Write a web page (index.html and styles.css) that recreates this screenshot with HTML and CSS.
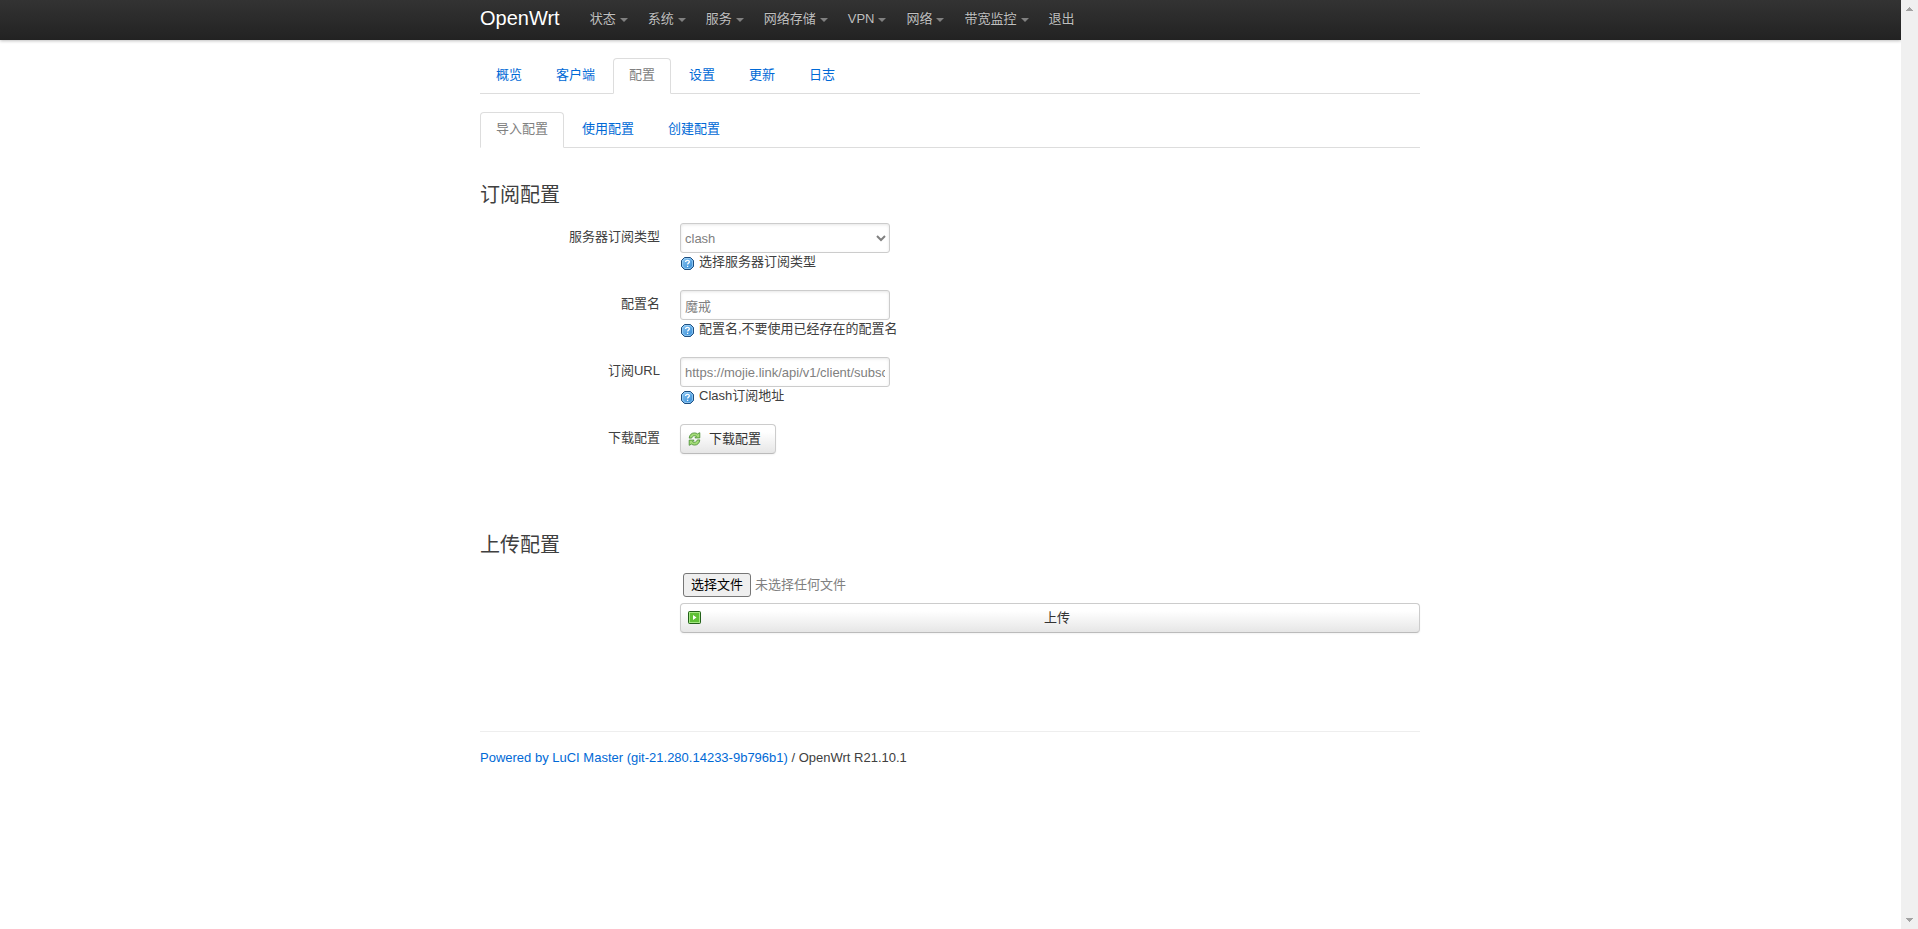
FILE: index.html
```html
<!DOCTYPE html>
<html lang="zh-CN">
<head>
    <meta charset="UTF-8">
    <meta name="viewport" content="width=device-width, initial-scale=1.0">
    <title>OpenWrt - Clash - LuCI</title>
    <link rel="stylesheet" href="styles.css">
</head>
<body>
    <div class="page">
        <header>
            <div class="container">
                <a class="brand" href="#">OpenWrt</a>
                <ul class="nav">
                    <li><a class="menu" href="#">状态</a></li>
                    <li><a class="menu" href="#">系统</a></li>
                    <li><a class="menu" href="#">服务</a></li>
                    <li><a class="menu" href="#">网络存储</a></li>
                    <li><a class="menu" href="#">VPN</a></li>
                    <li><a class="menu" href="#">网络</a></li>
                    <li><a class="menu" href="#">带宽监控</a></li>
                    <li><a href="#">退出</a></li>
                </ul>
            </div>
        </header>

        <main class="container">
            <ul class="tabs">
                <li><a href="#">概览</a></li>
                <li><a href="#">客户端</a></li>
                <li class="active"><a href="#">配置</a></li>
                <li><a href="#">设置</a></li>
                <li><a href="#">更新</a></li>
                <li><a href="#">日志</a></li>
            </ul>
            <ul class="tabs">
                <li class="active"><a href="#">导入配置</a></li>
                <li><a href="#">使用配置</a></li>
                <li><a href="#">创建配置</a></li>
            </ul>

            <svg class="defs" aria-hidden="true">
                <linearGradient id="blue" x1="0" y1="0" x2="1" y2="1">
                    <stop offset="0" stop-color="#8cc8f4"/>
                    <stop offset="1" stop-color="#2f86d2"/>
                </linearGradient>
                <symbol id="help" viewBox="0 0 14 14">
                    <path d="M3.5 .5h6L12.5 3.5v6L9.5 12.5h-6L.5 9.5v-6z" fill="url(#blue)" stroke="#1f4f80"/>
                    <path d="M4 1.5h5l2.5 2.5v5L9 11.5H4L1.5 9V4z" fill="none" stroke="#a5d5f8" stroke-opacity=".7"/>
                    <path d="M4.6 4.9c0-1.1.8-1.6 1.9-1.6s1.9.6 1.9 1.5c0 1.3-1.8 1.3-1.8 2.6M6.6 8.8V10" fill="none" stroke="#fff" stroke-width="1.3"/>
                </symbol>
            </svg>

            <form>
                <section>
                    <h3>订阅配置</h3>
                    <div class="row">
                        <label for="subtype">服务器订阅类型</label>
                        <div class="field">
                            <select id="subtype"><option>clash</option></select>
                            <div class="description"><svg class="icon"><use href="#help"/></svg>选择服务器订阅类型</div>
                        </div>
                    </div>
                    <div class="row">
                        <label for="config_name">配置名</label>
                        <div class="field">
                            <input type="text" id="config_name" value="魔戒">
                            <div class="description"><svg class="icon"><use href="#help"/></svg>配置名,不要使用已经存在的配置名</div>
                        </div>
                    </div>
                    <div class="row">
                        <label for="clash_url">订阅URL</label>
                        <div class="field">
                            <input type="text" id="clash_url" value="https://mojie.link/api/v1/client/subscribe">
                            <div class="description"><svg class="icon"><use href="#help"/></svg>Clash订阅地址</div>
                        </div>
                    </div>
                    <div class="row">
                        <label for="download">下载配置</label>
                        <div class="field">
                            <button type="button" class="btn" id="download">
                                <svg class="icon" viewBox="0 0 14 14">
                                    <g id="arrow" fill="#a4dc78" stroke="#43892c" stroke-width=".8">
                                        <path d="M1.2 6.1C1.5 2.8 3.6.9 6.4.9c1.3 0 2.3.4 3.1 1l2.3-1.2v5.2H6.9l1.5-1.7c-2-1-4-.3-4.8 1.9z"/>
                                    </g>
                                    <use href="#arrow" transform="rotate(180 6.5 7)"/>
                                </svg>
                                下载配置
                            </button>
                        </div>
                    </div>
                </section>

                <section>
                    <h3>上传配置</h3>
                    <div class="row">
                        <div class="field upload">
                            <input type="file" id="ulfile">
                            <label for="ulfile"><span class="choose">选择文件</span>未选择任何文件</label>
                            <button type="button" class="btn">
                                <svg class="icon" viewBox="0 0 14 14">
                                    <rect x=".5" y=".5" width="12" height="12" rx="1" fill="#5fc136" stroke="#23601a"/>
                                    <rect x="1.5" y="1.5" width="10" height="10" fill="none" stroke="#a5e884"/>
                                    <path d="M5 4l3.5 2.5L5 9z" fill="#fff"/>
                                </svg>
                                上传
                            </button>
                        </div>
                    </div>
                </section>
            </form>

            <footer>
                <a href="#">Powered by LuCI Master (git-21.280.14233-9b796b1)</a> / OpenWrt R21.10.1
            </footer>
        </main>
    </div>

    <div class="scrollbar" aria-hidden="true">
        <svg viewBox="0 0 7 4"><path d="M0 4V3h1V2h1V1h1V0h1v1h1v1h1v1h1v1z"/></svg>
        <svg viewBox="0 0 7 4"><path d="M0 0v1h1v1h1v1h1v1h1V3h1V2h1V1h1V0z"/></svg>
    </div>
</body>
</html>
```

FILE: styles.css
```css
* {
    box-sizing: border-box;
}
body {
    display: flex;
    margin: 0;
    min-height: 100vh;
    background: #fff;
    color: #404040;
    font: 13px/18px "Liberation Sans", Arial, "Noto Sans CJK SC", sans-serif;
}
a {
    color: #0069d6;
    text-decoration: none;
}
ul {
    display: flex;
    margin: 0;
    padding: 0;
    list-style: none;
}
.page {
    flex: 1;
    min-width: 0;
}
.container {
    max-width: 941px;
    margin: 0 auto;
    padding-right: 1px;
}

/* header */
header {
    height: 40px;
    background: linear-gradient(#333, #222);
    box-shadow: 0 1px 3px rgba(0, 0, 0, 0.25);
    text-shadow: 0 -1px 0 rgba(0, 0, 0, 0.25);
}
header .container {
    display: flex;
}
.brand {
    padding: 8px 20px 12px 0;
    color: #fff;
    font-size: 20px;
    line-height: 20px;
}
.nav a {
    display: flex;
    align-items: center;
    padding: 9px 10px 11px;
    color: #bfbfbf;
    line-height: 20px;
}
.nav .menu::after {
    content: "";
    margin: 2px 0 0 4px;
    border: 4px solid transparent;
    border-top-color: #808080;
    border-bottom: 0;
}

/* tabs */
.tabs {
    margin: 18px 0;
    border-bottom: 1px solid #ddd;
}
.tabs a {
    display: block;
    margin: 0 2px -1px 0;
    padding: 0 15px 2px;
    border: 1px solid transparent;
    border-radius: 4px 4px 0 0;
    line-height: 32px;
}
.tabs .active a {
    border-color: #ddd;
    border-bottom-color: #fff;
    background: #fff;
    color: #808080;
}

/* form */
.defs {
    display: block;
    width: 0;
    height: 0;
}
section {
    min-height: 350px;
    padding-top: 11px;
}
section + section {
    min-height: 0;
    padding-bottom: 79px;
}
h3 {
    margin: 0 0 10px;
    font-size: 20px;
    font-weight: normal;
    line-height: 36px;
}
.row {
    display: flex;
    margin-bottom: 19px;
}
.row > label {
    width: 180px;
    margin-right: 20px;
    padding-top: 5px;
    text-align: right;
}
.icon {
    flex: none;
    width: 14px;
    height: 14px;
}
select,
input[type="text"] {
    display: block;
    width: 210px;
    height: 30px;
    padding: 4px;
    border: 1px solid #ccc;
    border-radius: 3px;
    background: #fff;
    box-shadow: inset 0 1px 3px rgba(0, 0, 0, 0.1);
    color: #808080;
    font: inherit;
}
select {
    padding: 4px 0;
}
.description {
    display: flex;
    gap: 4px;
    padding-left: 1px;
}
.description .icon {
    margin-top: 4px;
}
.btn {
    position: relative;
    height: 30px;
    padding: 5px 14px 5px 28px;
    border: 1px solid #ccc;
    border-bottom-color: #bbb;
    border-radius: 4px;
    background: linear-gradient(#fff, #fff 25%, #e6e6e6);
    box-shadow: inset 0 1px 0 rgba(255, 255, 255, 0.2), 0 1px 2px rgba(0, 0, 0, 0.05);
    color: #333;
    font: inherit;
    cursor: pointer;
}
.btn .icon {
    position: absolute;
    top: 7px;
    left: 7px;
}
.upload {
    flex: 1;
    margin-left: 200px;
}
.upload input {
    position: absolute;
    width: 1px;
    height: 1px;
    opacity: 0;
}
.upload label {
    display: flex;
    align-items: center;
    height: 24px;
    margin-bottom: 6px;
    padding-left: 3px;
    color: #808080;
}
.upload .btn {
    width: 100%;
}
.choose {
    margin-right: 4px;
    padding: 2px 7px;
    border: 1px solid #767676;
    border-radius: 3px;
    background: #efefef;
    color: #000;
}

footer {
    padding: 17px 0;
    border-top: 1px solid #eee;
}

/* scroll track */
.scrollbar {
    position: sticky;
    top: 0;
    display: flex;
    flex-direction: column;
    align-items: center;
    justify-content: space-between;
    width: 17px;
    height: 100vh;
    padding: 7px 0;
    background: #f0f0f0;
}
.scrollbar svg {
    width: 7px;
    height: 4px;
    fill: #a3a3a3;
}
```
